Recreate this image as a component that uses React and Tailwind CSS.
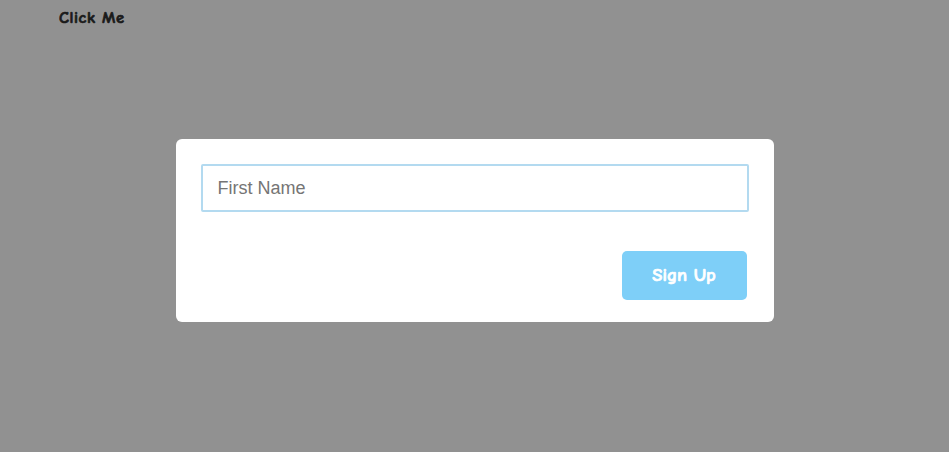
export default function App() {
  const comic = {
    fontFamily: '"Comic Sans MS", "Comic Neue", "DejaVu Sans", sans-serif',
    WebkitTextStroke: '0.7px currentColor',
  };
  return (
    <div className="w-[949px] h-[452px] bg-[#919191] relative overflow-hidden">
      <div className="pl-[59px] pt-[5px] h-[26px] leading-[24px]">
        <span className="text-[16.5px] font-bold text-[#1a1a1a] tracking-[0.6px]" style={comic}>Click Me</span>
      </div>
      <div className="flex justify-center pt-[113px]">
        <div className="w-[598px] h-[183px] bg-white rounded-[6px] pt-[25px] pl-[25px] pr-[27px] flex flex-col">
          <input
            className="w-[548px] h-[48px] border-2 border-[#b3daf0] rounded-[2px] px-[15px] text-[18px] text-[#333] placeholder:text-[#757575] outline-none"
            style={{ fontFamily: '"Liberation Sans", Arial, sans-serif' }}
            placeholder="First Name"
          />
          <div className="flex justify-end mt-[39px]">
            <button
              className="w-[125px] h-[49px] bg-[#7ecff8] rounded-[5px] text-white text-[18.5px] font-bold"
              style={comic}
            >
              Sign Up
            </button>
          </div>
        </div>
      </div>
    </div>
  );
}
